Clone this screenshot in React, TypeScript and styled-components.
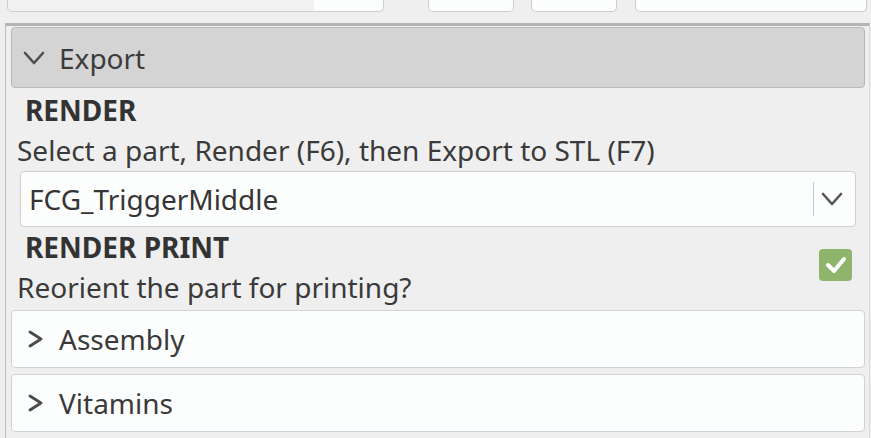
import React, { FC } from 'react';
import styled, { createGlobalStyle } from 'styled-components';

const GlobalStyle = createGlobalStyle`
    html, body {
        margin: 0;
        padding: 0;
        background: #efefef;
    }
    body {
        font-family: "Noto Sans", "DejaVu Sans", sans-serif;
        color: #353535;
        overflow: hidden;
    }
`

const Root = styled.div`
    width: 871px;
    height: 438px;
    background: #efefef;
    display: flex;
    flex-direction: column;
`

const TopRow = styled.div`
    height: 13px;
    display: flex;
    padding: 0 4px 0 7px;
`

const TopField = styled.div<{ $w: number; $gap: number; $fill?: number }>`
    width: ${p => p.$w}px;
    margin-left: ${p => p.$gap}px;
    height: 12px;
    box-sizing: border-box;
    border: 1px solid #cdcdcd;
    border-top: none;
    border-radius: 0 0 5px 5px;
    background: ${p => p.$fill
        ? `linear-gradient(to right, #f1f1f1 ${p.$fill}px, #fcfdfd ${p.$fill}px)`
        : '#fcfdfd'};
`

const Frame = styled.div`
    margin: 10px 1px 0 5px;
    flex: 1;
    border-left: 1px solid #bdbdbd;
    border-top: 3px solid #b3b3b3;
    border-right: 1px solid #dadada;
    padding: 1px 4px 0 5px;
    display: flex;
    flex-direction: column;
`

const GroupHeader = styled.div`
    height: 61px;
    box-sizing: border-box;
    background: #d4d4d4;
    border: 1px solid #b8b8b8;
    border-radius: 4px;
    display: flex;
    align-items: center;
    padding-left: 11px;
    font-size: 28px;
    color: #3c3c3c;
`

const Chevron = styled.svg<{ $gap: number }>`
    flex: none;
    margin-right: ${p => p.$gap}px;
`

const ParamName = styled.div<{ $top: number }>`
    margin-top: ${p => p.$top}px;
    padding-left: 14px;
    height: 40px;
    line-height: 40px;
    font-weight: 700;
    font-size: 28px;
    color: #333333;
    white-space: nowrap;
`

const ParamDesc = styled.div`
    padding-left: 6px;
    height: 40px;
    line-height: 40px;
    font-size: 28px;
    color: #3a3a3a;
    white-space: nowrap;
`

const Combo = styled.div`
    margin: 1px 9px 0 9px;
    height: 56px;
    box-sizing: border-box;
    background: #fcfdfd;
    border: 1px solid #cfcfcf;
    border-radius: 4px;
    display: flex;
    align-items: center;
    padding-left: 8px;
    font-size: 28px;
    color: #353535;
`

const ComboText = styled.span`
    flex: 1;
`

const ComboSep = styled.div`
    width: 1px;
    height: 34px;
    background: #c9c9c9;
    margin-right: 7px;
`

const ComboArrow = styled.div`
    margin-right: 12px;
    display: flex;
`

const CheckRow = styled.div`
    display: flex;
    align-items: center;
`

const CheckText = styled.div`
    flex: 1;
`

const CheckBox = styled.div`
    width: 33px;
    height: 32px;
    margin: 0 13px 4px 0;
    border-radius: 4px;
    background: #8fb56d;
    display: flex;
    align-items: center;
    justify-content: center;
`

const CollapsedGroup = styled.div<{ $top: number }>`
    margin-top: ${p => p.$top}px;
    height: 58px;
    box-sizing: border-box;
    background: #fcfdfd;
    border: 1px solid #d2d2d2;
    border-radius: 4px;
    display: flex;
    align-items: center;
    padding-left: 16px;
    font-size: 28px;
    color: #3a3a3a;
`

const DownChevron: FC<{ w: number; h: number; color: string }> = ({ w, h, color }) => (
    <svg width={w} height={h} viewBox={`0 0 ${w} ${h}`}>
        <polyline points={`2,2 ${w / 2},${h - 2} ${w - 2},2`} fill="none" stroke={color} strokeWidth="2.6" strokeLinecap="round" strokeLinejoin="round" />
    </svg>
)

const RightChevron: FC = () => (
    <Chevron $gap={16} width="15" height="18" viewBox="0 0 15 18">
        <polyline points="2,2 13,9 2,16" fill="none" stroke="#4a4a4a" strokeWidth="2.8" strokeLinecap="round" strokeLinejoin="round" />
    </Chevron>
)

const App: FC = () => {
    return (
        <Root>
            <GlobalStyle />
            <TopRow>
                <TopField $w={377} $gap={0} $fill={306} />
                <TopField $w={86} $gap={44} />
                <TopField $w={86} $gap={17} />
                <TopField $w={232} $gap={18} />
            </TopRow>
            <Frame>
                <GroupHeader>
                    <Chevron $gap={14} width="22" height="14" viewBox="0 0 22 14">
                        <polyline points="2,2 11,12 20,2" fill="none" stroke="#4f4f4f" strokeWidth="2.6" strokeLinecap="round" strokeLinejoin="round" />
                    </Chevron>
                    Export
                </GroupHeader>
                <ParamName $top={2}>RENDER</ParamName>
                <ParamDesc>Select a part, Render (F6), then Export to STL (F7)</ParamDesc>
                <Combo>
                    <ComboText>FCG_TriggerMiddle</ComboText>
                    <ComboSep />
                    <ComboArrow>
                        <DownChevron w={22} h={14} color="#555555" />
                    </ComboArrow>
                </Combo>
                <CheckRow>
                    <CheckText>
                        <ParamName $top={0}>RENDER PRINT</ParamName>
                        <ParamDesc>Reorient the part for printing?</ParamDesc>
                    </CheckText>
                    <CheckBox>
                        <svg width="22" height="18" viewBox="0 0 22 18">
                            <polyline points="3,9 9,15 19,3" fill="none" stroke="#ffffff" strokeWidth="4" strokeLinecap="round" strokeLinejoin="round" />
                        </svg>
                    </CheckBox>
                </CheckRow>
                <CollapsedGroup $top={3}>
                    <RightChevron />
                    Assembly
                </CollapsedGroup>
                <CollapsedGroup $top={6}>
                    <RightChevron />
                    Vitamins
                </CollapsedGroup>
            </Frame>
        </Root>
    );
}

export default App;
